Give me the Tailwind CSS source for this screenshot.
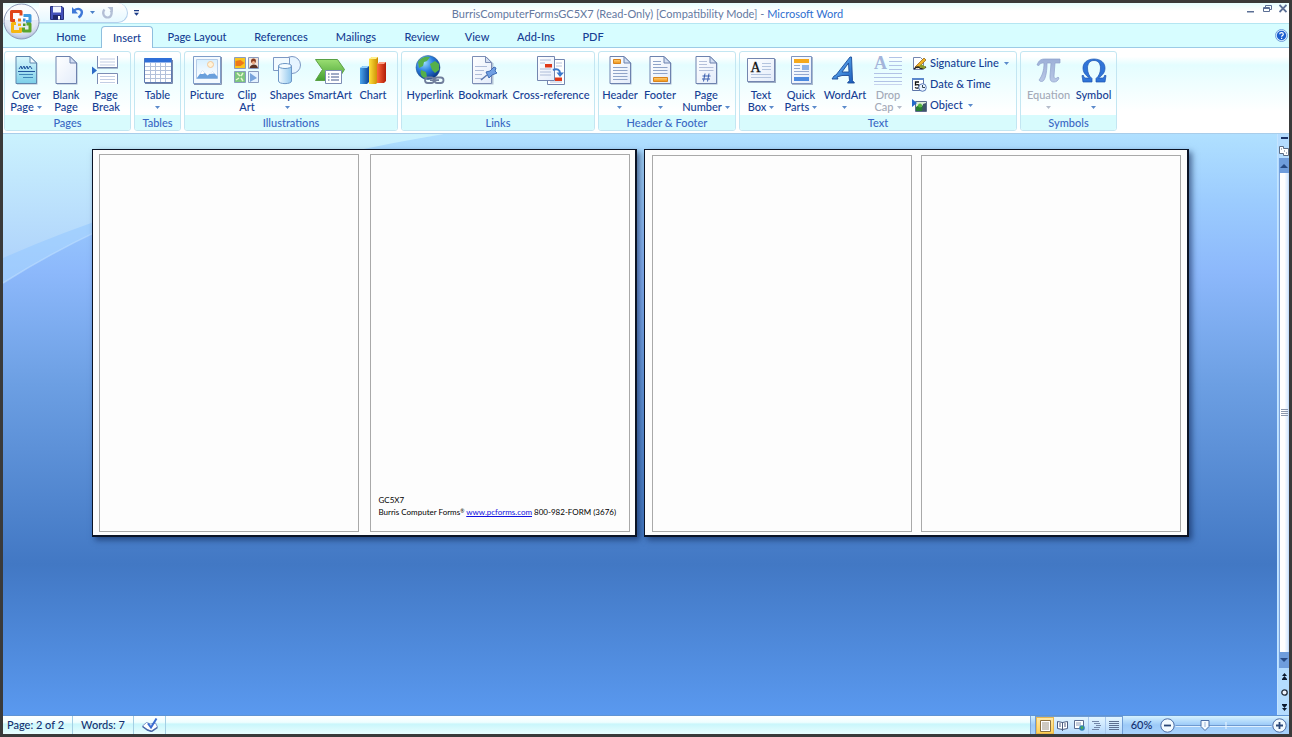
<!DOCTYPE html>
<html lang="en">
<head>
    <meta charset="UTF-8">
    <meta name="viewport" content="width=device-width, initial-scale=1.0">
    <title>BurrisComputerFormsGC5X7 - Microsoft Word</title>
    <script src="https://cdn.jsdelivr.net/npm/@tailwindcss/browser@4"></script>
</head>
<body class="h-screen overflow-hidden border-3 border-[#3a3a3a] flex flex-col font-[Lato,'Open_Sans',sans-serif] font-medium text-[11px] leading-3 text-[#153e94]">

    <!-- Shared gradients and small shapes -->
    <svg class="absolute w-0 h-0" aria-hidden="true">
        <defs>
            <linearGradient id="paper" x1="0" y1="0" x2="1" y2="1"><stop offset="0" stop-color="#fff"/><stop offset="1" stop-color="#e3ecfa"/></linearGradient>
            <linearGradient id="cover" x1="0" y1="0" x2="0" y2="1"><stop offset="0" stop-color="#d9f8fd"/><stop offset="1" stop-color="#7ccfe9"/></linearGradient>
            <linearGradient id="blue" x1="0" y1="0" x2="1" y2="1"><stop offset="0" stop-color="#6fc2ff"/><stop offset="1" stop-color="#1557b8"/></linearGradient>
            <linearGradient id="cyl" x1="0" y1="0" x2="1" y2="0"><stop offset="0" stop-color="#f4fbff"/><stop offset="1" stop-color="#92c8ee"/></linearGradient>
            <linearGradient id="green" x1="0" y1="0" x2="0" y2="1"><stop offset="0" stop-color="#9ade72"/><stop offset="1" stop-color="#45a032"/></linearGradient>
            <linearGradient id="barBlue" x1="0" y1="0" x2="1" y2="0"><stop offset="0" stop-color="#4aa6ee"/><stop offset="1" stop-color="#0d4596"/></linearGradient>
            <linearGradient id="barYellow" x1="0" y1="0" x2="1" y2="0"><stop offset="0" stop-color="#ffe23c"/><stop offset="1" stop-color="#c98a00"/></linearGradient>
            <linearGradient id="barRed" x1="0" y1="0" x2="1" y2="0"><stop offset="0" stop-color="#ff6a3a"/><stop offset="1" stop-color="#b01c08"/></linearGradient>
            <linearGradient id="orange" x1="0" y1="0" x2="0" y2="1"><stop offset="0" stop-color="#ffd27a"/><stop offset="1" stop-color="#f09010"/></linearGradient>
            <radialGradient id="globe" cx=".35" cy=".3" r=".8"><stop offset="0" stop-color="#9adcff"/><stop offset=".45" stop-color="#2a7fe0"/><stop offset="1" stop-color="#062a78"/></radialGradient>
            <radialGradient id="orb" cx=".5" cy=".35" r=".65"><stop offset="0" stop-color="#fff"/><stop offset=".7" stop-color="#f4f8fd"/><stop offset="1" stop-color="#a9b7d6"/></radialGradient>
            <linearGradient id="pi" x1="0" y1="0" x2="0" y2="1"><stop offset="0" stop-color="#9db0d8"/><stop offset="1" stop-color="#b9c8e6"/></linearGradient>
            <linearGradient id="sky" x1="0" y1="0" x2="0" y2="1"><stop offset="0" stop-color="#d8f0ff"/><stop offset="1" stop-color="#fff"/></linearGradient>
            <symbol id="down" viewBox="0 0 5 3"><path d="M0 0h5L2.500 3z" fill="currentColor"/></symbol>
            <symbol id="sheet" viewBox="0 0 30 30">
                <path d="M6 2h14l6.500 6.500V29.500H6z" fill="#7c8bad" opacity=".6"/>
                <path d="M5 1.500h14l6.500 6.500v20.500H5z" fill="url(#paper)" stroke="#6d82ae"/>
                <path d="M19 1.500v6.500h6.500z" fill="#d3def2" stroke="#6d82ae"/>
            </symbol>
        </defs>
    </svg>

    <!-- Title bar -->
    <header class="relative shrink-0 flex items-center h-[21px] bg-gradient-to-b from-[#e6feff] to-white to-40% border-b border-[#b5e6f2]">
        <div class="absolute left-0 top-0 z-10">
            <button aria-label="Office Button" class="block size-[38px]">
                <svg class="size-[38px]" viewBox="0 0 38 38">
                    <circle cx="18.500" cy="18.500" r="17.500" fill="url(#orb)" stroke="#8c99b8"/>
                    <path d="M2.500 17h32a16 16 0 0 1-32 0z" fill="#c3cfe6" opacity=".35"/>
                    <g fill="none" stroke-width="3" stroke-linejoin="round">
                        <path d="M12 17.500H8.500V8.500h9.500v4" stroke="#e0451a"/>
                        <path d="M20.500 12.500h6.500v6h-4" stroke="#3f9be0"/>
                        <path d="M13 20.500H9.500v8h8v-4" stroke="#f6b712"/>
                        <path d="M20.500 24.500v3.500h6.500v-7h-3.500" stroke="#5aa52c"/>
                    </g>
                    <path d="M15 15.500h3v3h-3z" fill="#f07818"/><path d="M20 15.500h2.500v3H20z" fill="#3a8cd8"/>
                    <path d="M15 20.500h3v2.500h-3z" fill="#f6b712"/><path d="M20 20.500h2.500v2.500H20z" fill="#4a9a28"/>
                </svg>
            </button>
        </div>
        <div class="ml-9 shrink-0 flex items-center h-[20px] w-[89px] pl-[9px] border-r border-b border-[#b4d0ec] rounded-r-full bg-gradient-to-b from-white to-[#e6f8ff]">
            <button aria-label="Save" class="size-[18px] flex items-center justify-center">
                <svg class="size-[14px]" viewBox="0 0 14 14"><path d="M.500.500h11.500L13.500 2v11.500H.500z" fill="#4350b8" stroke="#28307c"/><path d="M3 .500h8v6H3z" fill="#f2f6ff"/><path d="M3 9h8v4.500H3z" fill="#20286c"/><path d="M8 10h2v3.500H8z" fill="#fff"/></svg>
            </button>
            <button aria-label="Undo" class="ml-0.5 size-[18px] flex items-center justify-center">
                <svg class="size-[13px]" viewBox="0 0 13 13" fill="none"><path d="M3 4.500C8 1 12 4 10.500 8 10 9.500 9 10.500 7.500 11.500" stroke="#3f78d8" stroke-width="2.400"/><path d="M1 1v6.500h6z" fill="#3f78d8"/></svg>
            </button>
            <button aria-label="Undo options" class="w-3 h-4 flex items-center justify-center text-[#4a80c8]"><svg class="w-[5px] h-[3px]"><use href="#down"/></svg></button>
            <button aria-label="Redo" class="size-[18px] flex items-center justify-center">
                <svg class="size-[13px]" viewBox="0 0 13 13" fill="none"><path d="M3.500 3.500C.500 7 3 11.500 6.500 11.500S12 7 9.500 4.500" stroke="#b3bfd6" stroke-width="2.200"/><path d="M6.500 1H12v5.500z" fill="#b3bfd6"/></svg>
            </button>
        </div>
        <button aria-label="Customize Quick Access Toolbar" class="ml-0.5 w-3 h-4 flex items-center justify-center">
            <svg class="w-[5px] h-[6px]" viewBox="0 0 5 6"><path d="M0 0h5v1.300H0zM0 2.800h5L2.500 5.800z" fill="#1c3c88"/></svg>
        </button>
        <h1 class="flex-1 text-center whitespace-nowrap font-normal text-[#64799f] pt-px">BurrisComputerFormsGC5X7 (Read-Only) [Compatibility Mode] - <span class="text-[#2f6fd0]">Microsoft Word</span></h1>
        <div class="w-[136px] shrink-0 flex items-start justify-end h-full text-[#5b6f95]">
            <button aria-label="Minimize" class="w-[17px] h-3 flex justify-center"><svg class="w-[7px] h-[10px]" viewBox="0 0 7 10"><path d="M0 8h7v1.500H0z" fill="currentColor"/></svg></button>
            <button aria-label="Restore" class="w-[17px] h-3 flex justify-center"><svg class="w-[9px] h-[10px]" viewBox="0 0 9 10" fill="none" stroke="currentColor"><path d="M2.500 4V2.500h6v4H7"/><path d="M.500 4.500h6v4h-6zM.500 5.500h6"/></svg></button>
            <button aria-label="Close" class="w-[13px] h-3 flex justify-center"><svg class="w-2 h-[10px]" viewBox="0 0 8 10"><path d="M.500 2l7 7M7.500 2l-7 7" stroke="currentColor" stroke-width="1.800"/></svg></button>
        </div>
    </header>

    <!-- Ribbon tabs -->
    <nav class="shrink-0 flex h-6 pl-[38px] bg-[#d7fdff] border-b border-[#9ccbe6]">
        <button class="w-[60px] pt-[3px]">Home</button>
        <button class="w-[52px] h-6 mt-0.5 pb-px bg-white border border-b-0 border-[#8fbede] rounded-t-sm">Insert</button>
        <button class="w-[88px] pt-[3px]">Page Layout</button>
        <button class="w-[80px] pt-[3px]">References</button>
        <button class="w-[70px] pt-[3px]">Mailings</button>
        <button class="w-[62px] pt-[3px]">Review</button>
        <button class="w-[48px] pt-[3px]">View</button>
        <button class="w-[70px] pt-[3px]">Add-Ins</button>
        <button class="w-[44px] pt-[3px]">PDF</button>
        <button aria-label="Help" class="ml-auto mr-px">
            <svg class="size-[13px]" viewBox="0 0 13 13"><circle cx="6.500" cy="6.500" r="6" fill="#dff0ff" stroke="#6fa0dc"/><circle cx="6.500" cy="6.500" r="4.700" fill="#1c5fd0"/><path d="M4.700 5.200c0-2.200 3.600-2.200 3.600 0 0 1.300-1.700 1.200-1.700 2.500M6.600 8.700v1.200" stroke="#fff" stroke-width="1.200" fill="none"/></svg>
        </button>
    </nav>

    <!-- Ribbon -->
    <div class="shrink-0 flex gap-[3px] h-[86px] pt-[3px] pb-[2px] pl-px bg-gradient-to-b from-white from-10% via-[#e4fdff] via-20% to-white to-75% border-b border-[#a9cdea]">
        <section class="w-[127px] flex flex-col border border-[#c3e6f2] rounded-[3px] overflow-hidden">
            <div class="flex-1 flex pl-px pt-[3px]">
                <button class="w-10 flex flex-col items-center gap-1">
                    <svg class="size-[30px] shrink-0" viewBox="0 0 30 30"><path d="M6 2h14l6.500 6.500V29.500H6z" fill="#7c8bad" opacity=".6"/><path d="M5 1.500h14l6.500 6.500v20.500H5z" fill="url(#cover)" stroke="#5e87ae"/><path d="M19 1.500v6.500h6.500z" fill="#f4fbff" stroke="#5e87ae"/><path d="M8 14l2-3 1 3 2-3 1 3 2-3 1 3 2-3 2 3" stroke="#20559c" fill="none"/><path d="M7 16.500h17" stroke="#20559c"/><path d="M8 19.500h14" stroke="#3f86b8"/><path d="M12 22.500h10" stroke="#3f86b8"/></svg>
                    <span>Cover<br><span class="inline-flex items-center gap-[3px]">Page <svg class="w-[5px] h-[3px] text-[#5a8acb]"><use href="#down"/></svg></span></span>
                </button>
                <button class="w-10 flex flex-col items-center gap-1">
                    <svg class="size-[30px] shrink-0"><use href="#sheet"/></svg>
                    <span>Blank<br>Page</span>
                </button>
                <button class="w-10 flex flex-col items-center gap-1">
                    <svg class="size-[30px] shrink-0" viewBox="0 0 30 30"><path d="M6.500 1v11.500h20V1" fill="#fff" stroke="#7c8db5"/><path d="M6 13h21" stroke="#6d7ca3"/><path d="M9 4h15M9 7h15M9 10h15" stroke="#c2cde4"/><path d="M6.500 29V18.500h20V29" fill="#fff" stroke="#7c8db5"/><path d="M9 21.500h15M9 24.500h15M9 27.500h15" stroke="#c2cde4"/><path d="M1 11.500l5 4-5 4z" fill="#2e6cc6"/></svg>
                    <span>Page<br>Break</span>
                </button>
            </div>
            <h2 class="h-[15px] text-center bg-[#d8fbfd] text-[#3a68c4] leading-4">Pages</h2>
        </section>

        <section class="w-[47px] flex flex-col border border-[#c3e6f2] rounded-[3px] overflow-hidden">
            <div class="flex-1 flex justify-center pt-[3px]">
                <button class="w-10 flex flex-col items-center gap-1">
                    <svg class="size-[30px] shrink-0" viewBox="0 0 30 30"><path d="M1.500 3.500h27v24h-27z" fill="#fff" stroke="#5f7bb0"/><path d="M1.500 3h27v4.500h-27z" fill="#2f6fd8"/><path d="M2 11.500h26M2 15.500h26M2 19.500h26M2 23.500h26M7.500 8v19M12.500 8v19M17.500 8v19M22.500 8v19" stroke="#b3c1da"/><path d="M2 28.500h27.500V5" stroke="#7888ac" fill="none"/></svg>
                    <span class="flex flex-col items-center">Table<svg class="w-[5px] h-[3px] mt-[5px] text-[#5a8acb]"><use href="#down"/></svg></span>
                </button>
            </div>
            <h2 class="h-[15px] text-center bg-[#d8fbfd] text-[#3a68c4] leading-4">Tables</h2>
        </section>

        <section class="w-[214px] flex flex-col border border-[#c3e6f2] rounded-[3px] overflow-hidden">
            <div class="flex-1 flex pl-0.5 pt-[3px]">
                <button class="w-10 flex flex-col items-center gap-1">
                    <svg class="size-[30px] shrink-0" viewBox="0 0 30 30"><path d="M1.500 1.500h27v27h-27z" fill="#f4faff" stroke="#7f9cc8"/><path d="M2 29.500h27.500V2" stroke="#8a97b4" fill="none"/><path d="M4.500 4.500h21v19h-21z" fill="url(#sky)" stroke="#b5cde8"/><circle cx="18.500" cy="9.500" r="3" fill="#fff3d8" stroke="#f2c89a"/><path d="M4.500 23.500l6-8 5 5 5-4 5 5v2z" fill="#6aa0dc"/><path d="M8 19l2.500-3.500L13 18l-2 1zM17 19l3.500-2.500 2 2z" fill="#fff"/></svg>
                    <span>Picture</span>
                </button>
                <button class="w-10 flex flex-col items-center gap-1">
                    <svg class="size-[30px] shrink-0" viewBox="0 0 30 30"><g stroke="#8a9cc0"><path d="M2.500 2.500h11v11h-11z" fill="#f9c61e"/><path d="M16.500 2.500h10v11h-10z" fill="#f2e4d8"/><path d="M2.500 16.500h11v11h-11z" fill="#7cc67e"/><path d="M16.500 16.500h10v11h-10z" fill="#e4f2ff"/></g><path d="M3.500 11V6l5-1 4 3-4 3z" fill="#ee7a18"/><circle cx="21.500" cy="6" r="2.500" fill="#8a3c20"/><path d="M17.500 13c1-4 7-5 8.500 0z" fill="#5c3224"/><circle cx="21.500" cy="7.500" r="1.500" fill="#f2b088"/><path d="M5 18l3 3M11 18l-2 3M4 25l3-2M11 26l-2-3" stroke="#e4f7cc" stroke-width="1.500"/><path d="M18 18l7 5-7 4z" fill="#79a4dc"/></svg>
                    <span>Clip<br>Art</span>
                </button>
                <button class="w-10 flex flex-col items-center gap-1">
                    <svg class="size-[30px] shrink-0" viewBox="0 0 30 30"><circle cx="20" cy="10" r="8.500" fill="#e6f4ff" stroke="#7d98c4"/><path d="M1.500 2.500h16v13h-16z" fill="#f2faff" stroke="#7d98c4"/><path d="M6.500 11v15c0 3.500 13 3.500 13 0V11z" fill="url(#cyl)" stroke="#6c96c6"/><ellipse cx="13" cy="11" rx="6.500" ry="2.500" fill="#f4fbff" stroke="#6c96c6"/></svg>
                    <span class="flex flex-col items-center">Shapes<svg class="w-[5px] h-[3px] mt-[5px] text-[#5a8acb]"><use href="#down"/></svg></span>
                </button>
                <button class="w-[46px] flex flex-col items-center gap-1">
                    <svg class="size-[30px] shrink-0" viewBox="0 0 30 30"><path d="M.500 4.500h22l7 10-7 11H.500l7-11z" fill="url(#green)" stroke="#5aa044"/><path d="M10.500 15.500h16v13h-16z" fill="#fff" stroke="#7c8db5"/><path d="M13 19h1.500M16 19h8M13 22h1.500M16 22h8M13 25h1.500M16 25h8" stroke="#43598c"/></svg>
                    <span>SmartArt</span>
                </button>
                <button class="w-10 flex flex-col items-center gap-1">
                    <svg class="size-[30px] shrink-0" viewBox="0 0 30 30"><path d="M2 13l3-2h6v16l-2 2H2z" fill="url(#barBlue)"/><path d="M2 13l3-2h6l-2 2z" fill="#8fd0ff"/><path d="M11 4l3-2h6v25l-2 2h-7z" fill="url(#barYellow)"/><path d="M11 4l3-2h6l-2 2z" fill="#fff08c"/><path d="M19 9l3-2h6v19l-2 2h-7z" fill="url(#barRed)"/><path d="M19 9l3-2h6l-2 2z" fill="#ffa488"/></svg>
                    <span>Chart</span>
                </button>
            </div>
            <h2 class="h-[15px] text-center bg-[#d8fbfd] text-[#3a68c4] leading-4">Illustrations</h2>
        </section>

        <section class="w-[194px] flex flex-col border border-[#c3e6f2] rounded-[3px] overflow-hidden">
            <div class="flex-1 flex pl-px pt-[3px]">
                <button class="w-[54px] flex flex-col items-center gap-1">
                    <svg class="size-[30px] shrink-0" viewBox="0 0 30 30"><circle cx="13" cy="12.500" r="12" fill="url(#globe)" stroke="#2a5a8c" stroke-width=".500"/><path d="M3 7c3-5 8-6 12-5l-3 4-3 1-1 4-4 2zM15 9l5-3 4 3v6l-4 3-3-3zM6 15l5 2 1 5-3 1c-3-2-4-4-3-8z" fill="#55b04a"/><g fill="none" stroke="#707e9c" stroke-width="1.800"><rect x="10" y="22.500" width="9" height="5.500" rx="2.700"/><rect x="19.500" y="22.500" width="9" height="5.500" rx="2.700"/><path d="M15 25.200h9"/></g></svg>
                    <span>Hyperlink</span>
                </button>
                <button class="w-[52px] flex flex-col items-center gap-1">
                    <svg class="size-[30px] shrink-0" viewBox="0 0 30 30"><path d="M5 2h14l6.500 6.500V29.500H5z" fill="#7c8bad" opacity=".5"/><path d="M4.500 1.500h13l6 6v21h-19z" fill="url(#paper)" stroke="#7c8db5"/><path d="M17.500 1.500v6h6z" fill="#d3def2" stroke="#7c8db5"/><path d="M7 11.500h12M7 15.500h9M7 19.500h7M7 23.500h8" stroke="#aebcd8"/><path d="M13 25l6-5" stroke="#5a78b0" stroke-width="1.500"/><path d="M18 17l4-1 4-4 2 1-1 3 2 2-5 2-3 3z" fill="#6f9fe2" stroke="#3f6cb4"/></svg>
                    <span>Bookmark</span>
                </button>
                <button class="w-[84px] flex flex-col items-center gap-1">
                    <svg class="size-[30px] shrink-0" viewBox="0 0 30 30"><path d="M11.500 4.500h17v25h-17z" fill="#fff" stroke="#7486b0"/><path d="M20 8h6M20 11h6M14 27h12" stroke="#b8c4dc"/><path d="M1.500 1.500h17v24h-17z" fill="url(#paper)" stroke="#7486b0"/><path d="M4 5h11M4 8h5M4 14h11M4 17h11M4 20h11" stroke="#aebcd8"/><path d="M9 9h7v3.500H9z" fill="#e03818"/><path d="M19 22.500h7V26h-7z" fill="#e03818"/><path d="M17 15c4-2 7 0 7 3" stroke="#3b78cc" stroke-width="2" fill="none"/><path d="M20.500 17.500H28L24 22z" fill="#3b78cc"/></svg>
                    <span class="whitespace-nowrap">Cross-reference</span>
                </button>
            </div>
            <h2 class="h-[15px] text-center bg-[#d8fbfd] text-[#3a68c4] leading-4">Links</h2>
        </section>

        <section class="w-[138px] flex flex-col border border-[#c3e6f2] rounded-[3px] overflow-hidden">
            <div class="flex-1 flex pl-px pt-[3px]">
                <button class="w-10 flex flex-col items-center gap-1">
                    <svg class="size-[30px] shrink-0" viewBox="0 0 30 30"><use href="#sheet"/><path d="M8.500 4.500h7v4h-7z" fill="url(#orange)" stroke="#d8831c"/><path d="M8 12.500h14.500M8 15.500h14.500M8 18.500h14.500M8 21.500h14.500M8 24.500h14.500" stroke="#8fa3c8"/></svg>
                    <span class="flex flex-col items-center">Header<svg class="w-[5px] h-[3px] mt-[5px] text-[#5a8acb]"><use href="#down"/></svg></span>
                </button>
                <button class="w-10 flex flex-col items-center gap-1">
                    <svg class="size-[30px] shrink-0" viewBox="0 0 30 30"><use href="#sheet"/><path d="M8.500 22.500h14v4h-14z" fill="url(#orange)" stroke="#d8831c"/><path d="M8 6.500h8M8 9.500h8M8 12.500h14.500M8 15.500h14.500M8 18.500h14.500" stroke="#8fa3c8"/></svg>
                    <span class="flex flex-col items-center">Footer<svg class="w-[5px] h-[3px] mt-[5px] text-[#5a8acb]"><use href="#down"/></svg></span>
                </button>
                <button class="w-[52px] flex flex-col items-center gap-1">
                    <svg class="size-[30px] shrink-0" viewBox="0 0 30 30"><use href="#sheet"/><path d="M8 6.500h8M8 9.500h8M8 12.500h14.500M8 15.500h14.500" stroke="#b4c0da"/><path d="M14 18.500l-1.500 8M18 18.500l-1.500 8M11.500 21h8M11 24h8" stroke="#3a5fae"/></svg>
                    <span class="whitespace-nowrap">Page<br><span class="inline-flex items-center gap-[3px]">Number <svg class="w-[5px] h-[3px] text-[#5a8acb]"><use href="#down"/></svg></span></span>
                </button>
            </div>
            <h2 class="h-[15px] text-center bg-[#d8fbfd] text-[#3a68c4] leading-4">Header &amp; Footer</h2>
        </section>

        <section class="w-[278px] flex flex-col border border-[#c3e6f2] rounded-[3px] overflow-hidden">
            <div class="flex-1 flex pt-[3px] pl-px">
                <button class="w-10 flex flex-col items-center gap-1">
                    <svg class="size-[30px] shrink-0" viewBox="0 0 30 30"><path d="M2 4h28v24H2z" fill="#7c8bad" opacity=".7"/><path d="M1.500 3.500h27v23h-27z" fill="url(#paper)" stroke="#7486b0"/><text x="4.500" y="17" font-family="Liberation Serif, serif" font-size="14" fill="#111" stroke="#111" stroke-width=".300">A</text><path d="M16 8.500h9M16 11.500h9M16 14.500h9M5 19.500h20M5 22.500h20" stroke="#b4c4de"/></svg>
                    <span>Text<br><span class="inline-flex items-center gap-[3px]">Box <svg class="w-[5px] h-[3px] text-[#5a8acb]"><use href="#down"/></svg></span></span>
                </button>
                <button class="w-10 flex flex-col items-center gap-1">
                    <svg class="size-[30px] shrink-0" viewBox="0 0 30 30"><path d="M6 2h21v28H6z" fill="#7c8bad" opacity=".6"/><path d="M5.500 1.500h20v27h-20z" fill="url(#paper)" stroke="#7c94c0"/><path d="M8 4h15v4H8z" fill="#f5a81c"/><path d="M8 10.500h6M8 13.500h6M8 16.500h15M8 19.500h15" stroke="#93a8d0"/><path d="M16 10h7v5h-7z" fill="#8db2e6"/><path d="M8 22h15v4H8z" fill="#4c8ae0"/></svg>
                    <span>Quick<br><span class="inline-flex items-center gap-[3px]">Parts <svg class="w-[5px] h-[3px] text-[#5a8acb]"><use href="#down"/></svg></span></span>
                </button>
                <button class="w-12 flex flex-col items-center gap-1">
                    <svg class="size-[30px] shrink-0" viewBox="0 0 30 30"><path fill-rule="evenodd" d="M20 2h1.500l1 23.500 2 2.500h-7l2-2.500-.500-5h-7L7 22l1 2H2l2-3 2-1zM18.500 8L12 17h7z" fill="url(#blue)" stroke="#1c4c98" stroke-width=".900"/></svg>
                    <span class="flex flex-col items-center">WordArt<svg class="w-[5px] h-[3px] mt-[5px] text-[#5a8acb]"><use href="#down"/></svg></span>
                </button>
                <button disabled class="w-[38px] flex flex-col items-center gap-1 text-[#a3aab8]">
                    <svg class="size-[30px] shrink-0 overflow-visible" viewBox="0 0 30 30"><text x="1" y="14" font-family="Liberation Serif, serif" font-weight="bold" font-size="18" fill="#a3b4da">A</text><path d="M16 2.500h13M16 6.500h13M16 10.500h13M16 14.500h13M1 18.500h28M1 22.500h28M1 26.500h28" stroke="#b2c3e6"/><path d="M1 29.500h28" stroke="#c8d4ee"/></svg>
                    <span>Drop<br><span class="inline-flex items-center gap-[3px]">Cap <svg class="w-[5px] h-[3px] text-[#b4bccb]"><use href="#down"/></svg></span></span>
                </button>
                <div class="flex flex-col gap-[5px] pl-[5px]">
                    <button class="flex items-center gap-[3px] h-4 whitespace-nowrap">
                        <svg class="size-[15px]" viewBox="0 0 15 15"><path d="M1.500 1.500h7l3 3v9h-10z" fill="#fff" stroke="#7486b0"/><path d="M3 11l9-9 2 2-8 8z" fill="#f0b224" stroke="#8c5c10" stroke-width=".700"/><path d="M2 13c3-3 5-2 6-1s4 0 6-1" stroke="#222" stroke-width="1.400" fill="none"/><path d="M9 8l5 3-2 2-5-2z" fill="#8c9c2c"/></svg>
                        Signature Line <svg class="ml-0.5 w-[5px] h-[3px] text-[#5a8acb]"><use href="#down"/></svg>
                    </button>
                    <button class="flex items-center gap-[3px] h-4 whitespace-nowrap">
                        <svg class="size-[15px]" viewBox="0 0 15 15"><path d="M.500 1.500h11v12H.500z" fill="#fff" stroke="#5c74a8"/><path d="M0 1h12v2H0z" fill="#5c88cc"/><path d="M7 5H3.500v3c3-1 4 0 3.500 2-.500 1.500-2.500 1.500-4 .500" stroke="#111" stroke-width="1.300" fill="none"/><circle cx="10.500" cy="10.500" r="3.800" fill="#e8f2ff" stroke="#5c7cb8"/><path d="M10.500 8v2.500H13" stroke="#345" fill="none"/></svg>
                        Date &amp; Time
                    </button>
                    <button class="flex items-center gap-[3px] h-4 whitespace-nowrap">
                        <svg class="size-[15px]" viewBox="0 0 15 15"><path d="M3.500 3.500h11v10h-11z" fill="#dcecd8" stroke="#5c6c8c"/><path d="M4 13V9l3-2 2 2 3-3v7z" fill="#287c34"/><path d="M10 13l1-7 3-1v8z" fill="#3f5568"/><circle cx="8" cy="7.500" r="2" fill="#55b83c"/><path d="M0 1l5 4-5 4z" fill="#2468cc"/></svg>
                        Object <svg class="ml-0.5 w-[5px] h-[3px] text-[#5a8acb]"><use href="#down"/></svg>
                    </button>
                </div>
            </div>
            <h2 class="h-[15px] text-center bg-[#d8fbfd] text-[#3a68c4] leading-4">Text</h2>
        </section>

        <section class="w-[97px] flex flex-col border border-[#c3e6f2] rounded-[3px] overflow-hidden">
            <div class="flex-1 flex justify-center pt-[3px]">
                <button disabled class="w-[50px] flex flex-col items-center gap-1 text-[#a3aab8]">
                    <svg class="size-[30px] shrink-0" viewBox="0 0 30 30"><path d="M3 10C5 5 7 4 11 4h15v4h-5l-1 13c0 3 2 3 4 1l1 1c-1 3-3 4-5 4-4 0-4-3-4-6l1-13h-4c0 7-1 14-3 17-1 2-4 2-5 0 3-4 5-9 5-17-3 0-4 .500-5 2.500z" fill="url(#pi)" stroke="#8fa2cc" stroke-width=".700"/></svg>
                    <span class="flex flex-col items-center">Equation<svg class="w-[5px] h-[3px] mt-[5px] text-[#b4bccb]"><use href="#down"/></svg></span>
                </button>
                <button class="w-10 flex flex-col items-center gap-1">
                    <svg class="size-[30px] shrink-0" viewBox="0 0 30 30"><path d="M3 20.500h1.500c.500 2 1 2.500 3 2.500h3C6 20 4 17 4 13 4 7.500 8.500 4 15 4s11 3.500 11 9c0 4-2 7-6.500 10h3c2 0 2.500-.500 3-2.500H27L26 27h-9v-3.500c3-2.500 4.500-6 4.500-10.500 0-4.500-2.500-7.500-6.500-7.500S8.500 8.500 8.500 13c0 4.500 1.500 8 4.500 10.500V27H4z" fill="#2f74d8" stroke="#1d55b0" stroke-width=".700"/></svg>
                    <span class="flex flex-col items-center">Symbol<svg class="w-[5px] h-[3px] mt-[5px] text-[#5a8acb]"><use href="#down"/></svg></span>
                </button>
            </div>
            <h2 class="h-[15px] text-center bg-[#d8fbfd] text-[#3a68c4] leading-4">Symbols</h2>
        </section>
    </div>

    <!-- Workspace -->
    <div class="flex-1 min-h-0 flex">
        <main class="relative flex-1 flex items-start justify-center gap-[7px] pt-[15px] bg-[linear-gradient(to_bottom,#b0e0ff_0%,#9bcbfe_12%,#8cb8fb_24%,#6c9fe3_43%,#4278c4_74%,#5a99ef_100%)]">
            <!-- Light sweep across the top left corner -->
            <svg class="absolute inset-0 w-full h-full" viewBox="0 0 1274 581" preserveAspectRatio="none">
                <defs>
                    <linearGradient id="swoosh" x1="0" y1="0" x2="0" y2="125" gradientUnits="userSpaceOnUse"><stop offset="0" stop-color="#cbf2fe"/><stop offset="1" stop-color="#b0d4fb"/></linearGradient>
                </defs>
                <path d="M0 149Q180 35 440 0H0z" fill="#aedaff" opacity=".55"/>
                <path d="M0 149Q180 35 440 0" fill="none" stroke="#c5e4ff" stroke-width="1.500" opacity=".5"/>
                <path d="M0 124Q180 45 440 0H0z" fill="url(#swoosh)"/>
            </svg>
            <article class="relative w-[545px] h-[388px] flex gap-[11px] pl-[6px] pt-1 bg-[#fdfdfd] border border-r-2 border-b-2 border-[#0b1426] shadow-[3px_3px_6px_#0a204c99]">
                <div class="w-[260px] h-[378px] border border-[#a9a9a9]"></div>
                <div class="w-[260px] h-[378px] border border-[#a9a9a9] flex flex-col justify-end pb-[13px] pl-2 font-normal text-[8px] text-black whitespace-nowrap">
                    <p>GC5X7</p>
                    <p>Burris Computer Forms<sup class="text-[5px]">®</sup> <a href="http://www.pcforms.com" class="text-[#1010e0] underline">www.pcforms.com</a> 800-982-FORM (3676)</p>
                </div>
            </article>
            <article class="relative w-[545px] h-[388px] flex gap-[9px] pl-[7px] pt-[5px] bg-[#fdfdfd] border border-r-2 border-b-2 border-[#0b1426] shadow-[3px_3px_6px_#0a204c99]">
                <div class="w-[260px] h-[377px] border border-[#a9a9a9]"></div>
                <div class="w-[260px] h-[377px] border border-[#a9a9a9]"></div>
            </article>
        </main>

        <!-- Vertical scrollbar -->
        <aside class="w-3 shrink-0 flex flex-col items-stretch bg-[#b4dcff] border-l border-[#c4e4ff] pl-px">
            <button aria-label="Split" class="h-2 flex items-center"><span class="block mx-auto w-[7px] h-0.5 bg-[#1c3468]"></span></button>
            <button aria-label="View Ruler" class="h-4">
                <svg class="w-[10px] h-[13px]" viewBox="0 0 10 13"><path d="M.500 2.500h4v2h5v7h-5v-2h-4z" fill="#fff" stroke="#5c6c84"/><path d="M2 5h1M5 7h1M7 9h1" stroke="#5c6c84"/></svg>
            </button>
            <button aria-label="Scroll up" class="h-[15px] flex items-center justify-center bg-[#6f9ddc]"><svg class="w-[8px] h-[4px]" viewBox="0 0 8 4"><path d="M0 4h8L4 0z" fill="#274a84"/></svg></button>
            <div class="flex-1 flex items-center justify-center bg-gradient-to-r from-white from-55% to-[#d8eaff] border-x border-l-[#7da2d8] border-r-[#c4defc]">
                <svg class="w-[7px] h-2" viewBox="0 0 7 8"><path d="M0 .500h7M0 2.500h7M0 4.500h7M0 6.500h7" stroke="#8a97ad"/></svg>
            </div>
            <button aria-label="Scroll down" class="h-4 flex items-center justify-center bg-[#6f9ddc]"><svg class="w-[8px] h-[4px]" viewBox="0 0 8 4"><path d="M0 0h8L4 4z" fill="#274a84"/></svg></button>
            <button aria-label="Previous Page" class="h-4 flex items-center justify-center"><svg class="w-[5px] h-[7px]" viewBox="0 0 5 7"><path d="M2.500 0L5 3H0zM2.500 3L5 6H0zM0 6h5v1H0z" fill="#0c1a30"/></svg></button>
            <button aria-label="Select Browse Object" class="h-4 flex items-center justify-center"><svg class="size-[7px]" viewBox="0 0 7 7"><circle cx="3.500" cy="3.500" r="2.700" fill="#eef4ff" stroke="#222c3c" stroke-width="1.300"/></svg></button>
            <button aria-label="Next Page" class="h-[15px] flex items-center justify-center"><svg class="w-[5px] h-[7px]" viewBox="0 0 5 7"><path d="M0 0h5v1H0zM0 1h5L2.500 4zM0 4h5L2.500 7z" fill="#0c1a30"/></svg></button>
        </aside>
    </div>

    <!-- Status bar -->
    <footer class="shrink-0 flex items-center h-[19px] border-t border-[#5f94d4] bg-[linear-gradient(to_bottom,#ffffff_0%,#effeff_35%,#c9f6fb_45%,#e9feff_100%)] text-[#14306f]">
        <button class="h-full w-[70px] pr-1 border-r border-[#a4cfe4]">Page: 2 of 2</button>
        <button class="h-full w-[61px] border-r border-[#a4cfe4]">Words: 7</button>
        <button aria-label="Proofing" class="h-full w-8 flex items-center justify-center border-r border-[#a4cfe4]">
            <svg class="w-4 h-[14px]" viewBox="0 0 16 14"><path d="M.500 8l4-3.500 4 1.500 5-1 2 4-6 4-4-1z" fill="#fff" stroke="#7a94c8"/><path d="M.500 8.500L5.500 12l4 1.500 6-4" stroke="#4a68a8" stroke-width="1.500" fill="none"/><path d="M6 5.500l3 4L14.500.500" stroke="#3a6cd0" stroke-width="2" fill="none"/></svg>
        </button>
        <div class="ml-auto h-full w-[259px] flex items-center border-l border-[#7fa8d8] bg-gradient-to-b from-[#d6f2ff] via-[#9ccaf8] via-50% to-[#a9d2fc]">
            <div class="ml-1 flex h-full w-[88px] border border-b-0 border-[#6f9cd4] bg-gradient-to-b from-[#e4f6ff] to-[#b4d8fc]">
                <button aria-label="Print Layout" class="w-[18px] flex items-center justify-center bg-gradient-to-b from-[#ffe9a8] to-[#ffd052] border border-[#e8b850]"><svg class="w-[11px] h-3" viewBox="0 0 11 12"><path d="M.500.500h10v11H.500z" fill="#fff" stroke="#8a7040"/><path d="M2 3h7M2 5h7M2 7h7M2 9h7" stroke="#9c9484"/></svg></button>
                <button aria-label="Full Screen Reading" class="w-[17px] flex items-center justify-center"><svg class="w-[11px] h-[11px]" viewBox="0 0 11 11"><path d="M.500 1.500l5 1 5-1v7l-5 1-5-1z" fill="#fff" stroke="#4c5c80"/><path d="M5.500 2v9M2 4h2M2 6h2M7 4h2M7 6h2" stroke="#4c5c80"/></svg></button>
                <button aria-label="Web Layout" class="w-[17px] flex items-center justify-center"><svg class="w-[11px] h-[11px]" viewBox="0 0 11 11"><path d="M.500.500h9v8h-9z" fill="#fff" stroke="#5c6c90"/><path d="M2 3h5M2 5h5" stroke="#8c9cb8"/><circle cx="8" cy="8" r="2.800" fill="#2f80b8"/><path d="M6.500 7l2-1 1 2-2 1.500z" fill="#4cae4c"/></svg></button>
                <button aria-label="Outline" class="w-[17px] flex items-center justify-center border-l border-[#a9c8ec]"><svg class="w-[10px] h-[9px]" viewBox="0 0 10 9"><path d="M0 .500h7M2 2.500h6M4 4.500h5M2 6.500h6M0 8.500h7" stroke="#7386a8"/></svg></button>
                <button aria-label="Draft" class="flex-1 flex items-center justify-center border-l border-[#a9c8ec]"><svg class="w-[10px] h-[9px]" viewBox="0 0 10 9"><path d="M0 .500h10M0 2.500h10M0 4.500h10M0 6.500h10M0 8.500h10" stroke="#5d7090"/></svg></button>
            </div>
            <button class="w-[37px]">60%</button>
            <button aria-label="Zoom Out" class="shrink-0"><svg class="size-[15px]" viewBox="0 0 15 15"><circle cx="7.500" cy="7.500" r="6.700" fill="#f2faff" stroke="#4a6ca4"/><path d="M4 7.500h7" stroke="#2c4878" stroke-width="1.800"/></svg></button>
            <div class="relative flex-1 h-full flex items-center">
                <input type="range" aria-label="Zoom" min="10" max="500" value="60" class="absolute inset-0 w-full opacity-0">
                <svg class="w-full h-[13px]" viewBox="0 0 96 13"><path d="M0 6.500h96" stroke="#6f9ad0"/><path d="M0 7.500h96" stroke="#dff0ff"/><path d="M50.500 3v7" stroke="#eef8ff"/><path d="M25.500 1.500h8v6l-4 4-4-4z" fill="#f4faff" stroke="#4a6ca4"/><path d="M29.500 3v5" stroke="#9cb4d8"/></svg>
            </div>
            <button aria-label="Zoom In" class="shrink-0 mr-0.5"><svg class="size-[15px]" viewBox="0 0 15 15"><circle cx="7.500" cy="7.500" r="6.700" fill="#f2faff" stroke="#4a6ca4"/><path d="M4 7.500h7M7.500 4v7" stroke="#2c4878" stroke-width="1.800"/></svg></button>
        </div>
    </footer>
</body>
</html>
